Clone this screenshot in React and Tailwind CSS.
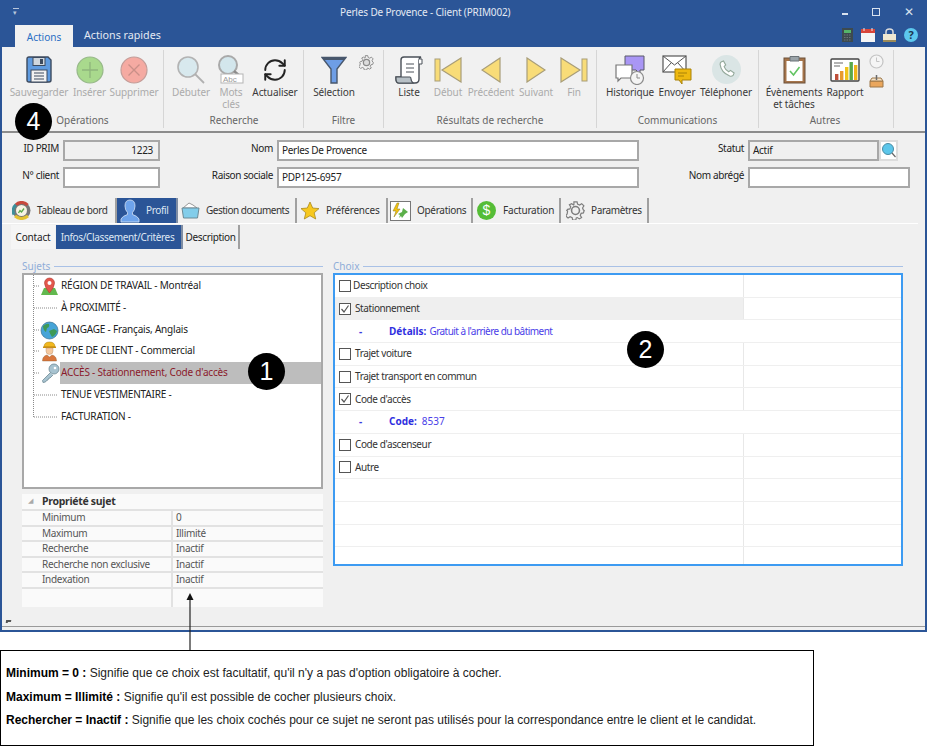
import { RefreshCw } from 'lucide-react';

// ---- ribbon icons ----
const Save = () => (
  <svg width="26" height="27" viewBox="0 0 26 27">
    <path d="M1 3q0-2 2-2h19l3 3v20q0 2-2 2H3q-2 0-2-2z" fill="#5f9be0" stroke="#3c4a5e" strokeWidth="1.4" />
    <rect x="7" y="1.5" width="12" height="8" fill="#cfd6dd" stroke="#3c4a5e" />
    <rect x="14" y="3" width="3" height="5" fill="#3c4a5e" />
    <rect x="5" y="14" width="16" height="12" fill="#f2f2f2" stroke="#3c4a5e" />
    <path d="M8 17h10M8 20h10M8 23h10" stroke="#3c4a5e" />
  </svg>
);
const PlusCircle = () => (
  <svg width="28" height="28" viewBox="0 0 28 28">
    <circle cx="14" cy="14" r="13" fill="#a9d98d" stroke="#98b98a" strokeWidth="1.2" />
    <path d="M14 6v16M6 14h16" stroke="#8fb57c" strokeWidth="1.3" />
  </svg>
);
const XCircle = () => (
  <svg width="28" height="28" viewBox="0 0 28 28">
    <circle cx="14" cy="14" r="13" fill="#f5aaa2" stroke="#c39d99" strokeWidth="1.2" />
    <path d="M8.5 8.5l11 11M19.5 8.5l-11 11" stroke="#c98f88" strokeWidth="1.3" />
  </svg>
);
const Lens = () => (
  <svg width="30" height="28" viewBox="0 0 30 28">
    <circle cx="12" cy="11" r="10" fill="#d8e9ee" stroke="#b3b3b3" strokeWidth="1.6" />
    <path d="M19 18l9 9" stroke="#b0b0b0" strokeWidth="1.8" />
  </svg>
);
const LensAbc = () => (
  <svg width="28" height="29" viewBox="0 0 28 29">
    <circle cx="11" cy="10" r="9" fill="#d3e6ec" stroke="#a9a9a9" strokeWidth="2" />
    <path d="M17 16l7 6" stroke="#8c8c8c" strokeWidth="2.4" />
    <rect x="4" y="19" width="22" height="9" fill="#fff" stroke="#b5b5b5" />
    <text x="6" y="27" fontSize="8" fill="#9a9a9a" fontFamily="Liberation Sans">Abc</text>
  </svg>
);
const Funnel = () => (
  <svg width="26" height="28" viewBox="0 0 26 28">
    <path d="M1 1.5h24L16 13v14h-6V13z" fill="#6e9ee6" stroke="#48576c" strokeWidth="1.4" />
    <path d="M1 1h24l-2 3H3z" fill="#48576c" />
  </svg>
);
const Gear = ({ size = 16, color = '#8a8a8a', hole = '#dcdcdc' }) => (
  <svg width={size} height={size} viewBox="0 0 24 24">
    <path d="M10 1h4l.6 3 2.6 1.1 2.6-1.7 2.8 2.8-1.7 2.6L22 11.4l1 .6v0l-1 3-2.9.6-1.1 2.6 1.7 2.6-2.8 1.8-2.6-1.7-1.3.5-.6 2.6h-4l-.6-3-2.6-1.1-2.6 1.7-2.8-2.8 1.7-2.6L2 12.6l-1-.6 1-1.4 2.9-.6L6 7.4 4.3 4.8l2.8-1.4 2.6 1.7L10 4.6z" fill="#f0f0f0" stroke={color} strokeWidth="1.5" />
    <circle cx="12" cy="12" r="5" fill={hole} stroke={color} strokeWidth="2" />
  </svg>
);
const Scroll = () => (
  <svg width="28" height="28" viewBox="0 0 28 28">
    <path d="M6 21V4q0-3 3-3h17q-2 1-2 3v19q0 4-4 4H4q-3 0-3-4v-2z" fill="#fff" stroke="#4a5058" strokeWidth="1.4" />
    <path d="M1 21h14q1 0 1 2t2 4H4q-3 0-3-4z" fill="#b7c0c6" stroke="#4a5058" strokeWidth="1.2" />
    <path d="M11 8h8M11 12h8M11 16h8" stroke="#4a5058" />
    <path d="M24 3h3v5h-3" fill="#fff" stroke="#4a5058" />
  </svg>
);
const navFill = '#f8dc78';
const navStroke = '#a89d78';
const First = () => (
  <svg width="28" height="26" viewBox="0 0 28 26">
    <rect x="1" y="2" width="5" height="22" fill={navFill} stroke={navStroke} />
    <path d="M27 1v24L8 13z" fill={navFill} stroke={navStroke} strokeWidth="1.2" />
  </svg>
);
const Prev = () => (
  <svg width="20" height="26" viewBox="0 0 20 26">
    <path d="M19 1v24L1 13z" fill={navFill} stroke={navStroke} strokeWidth="1.2" />
  </svg>
);
const Next = () => (
  <svg width="20" height="26" viewBox="0 0 20 26">
    <path d="M1 1v24l18-12z" fill={navFill} stroke={navStroke} strokeWidth="1.2" />
  </svg>
);
const Last = () => (
  <svg width="28" height="26" viewBox="0 0 28 26">
    <rect x="22" y="2" width="5" height="22" fill={navFill} stroke={navStroke} />
    <path d="M1 1v24l19-12z" fill={navFill} stroke={navStroke} strokeWidth="1.2" />
  </svg>
);
const History = () => (
  <svg width="30" height="30" viewBox="0 0 30 30">
    <path d="M10 1h19v14h-4v4l-4-4H10z" fill="#a996f5" stroke="#5a5a68" />
    <path d="M1 10h16v13H6l-3 3v-3H1z" fill="#fff" stroke="#777" strokeWidth="1.2" />
    <circle cx="22" cy="23" r="6.5" fill="#f4f4f4" stroke="#8a8a8a" strokeWidth="1.2" />
    <path d="M22 19v4h3" stroke="#8a8a8a" fill="none" />
  </svg>
);
const Send = () => (
  <svg width="30" height="30" viewBox="0 0 30 30">
    <rect x="1" y="1" width="23" height="16" fill="#fff" stroke="#555" strokeWidth="1.2" />
    <path d="M1 1l11.5 9L24 1M1 17l8-9M24 17l-8-9" stroke="#555" fill="none" />
    <path d="M13 14h16v11H20v4l-3-4h-4z" fill="#efb90f" stroke="#a98208" />
    <path d="M16 18h9M16 21h6" stroke="#a98208" />
  </svg>
);
const Phone = () => (
  <svg width="29" height="29" viewBox="0 0 29 29">
    <circle cx="14.5" cy="14.5" r="14.5" fill="#dae5e5" />
    <path d="M9 7l2.5-1 2.2 4-1.6 1.6q1 3 4.6 5.2l1.8-1.4 3.6 2.6-1 2.4q-1.4 1.2-3.4.6-8.6-3.4-9.6-11.6 0-1.8 1-2.4z" fill="#fff" stroke="#93a89a" strokeWidth="1.1" />
  </svg>
);
const Clipboard = () => (
  <svg width="23" height="29" viewBox="0 0 23 29">
    <rect x="1" y="3" width="21" height="25" fill="#a5744a" stroke="#6d5038" />
    <rect x="3.5" y="6" width="16" height="20" fill="#fff" />
    <path d="M7 1.5h9V6H7z" fill="#9aa3a8" stroke="#6b7378" />
    <path d="M7 16l3.5 4 6-8" stroke="#62c462" strokeWidth="1.6" fill="none" />
  </svg>
);
const Report = () => (
  <svg width="30" height="24" viewBox="0 0 30 24">
    <rect x="1" y="1" width="28" height="22" rx="1" fill="#fff" stroke="#444" strokeWidth="1.4" />
    <path d="M4 5h9M4 8h6" stroke="#9a9a9a" strokeWidth="1.4" />
    <rect x="5" y="16" width="3.4" height="6" fill="#c0503a" />
    <rect x="10" y="13" width="3.4" height="9" fill="#e89a2c" />
    <rect x="15" y="9" width="3.4" height="13" fill="#f0c419" />
    <rect x="19.5" y="4" width="3.4" height="18" fill="#5aa84a" />
    <rect x="24" y="7" width="3.4" height="15" fill="#f0b419" />
  </svg>
);
const SmallClock = () => (
  <svg width="15" height="15" viewBox="0 0 15 15">
    <circle cx="7.5" cy="7.5" r="6.5" fill="#f5f5f5" stroke="#c4c4c4" strokeWidth="1.2" />
    <path d="M7.5 3.5v4h3" stroke="#c4c4c4" fill="none" />
  </svg>
);
const Inbox = () => (
  <svg width="15" height="13" viewBox="0 0 15 13">
    <path d="M1 6h13v6H1z" fill="#eaa65c" stroke="#9c7748" />
    <path d="M3 3h9l2 3H1z" fill="#f5e2c6" stroke="#9c7748" />
    <path d="M7.5 0v5" stroke="#6b6b6b" strokeWidth="1.5" />
  </svg>
);

// ---- title bar icons ----
const Calc = () => (
  <svg width="11" height="14" viewBox="0 0 11 14">
    <rect width="11" height="14" fill="#3d4a4e" />
    <rect x="2" y="2" width="7" height="3" fill="#55b56a" />
    <path d="M2 7h7M2 9.5h7M2 12h7" stroke="#6a7478" strokeDasharray="1.5 1" />
  </svg>
);
const Calendar = () => (
  <svg width="14" height="14" viewBox="0 0 14 14">
    <rect y="1" width="14" height="13" fill="#f5f5f5" />
    <rect y="1" width="14" height="4" fill="#d9453a" />
    <path d="M3 0v3M11 0v3" stroke="#eee" />
  </svg>
);
const Lock = () => (
  <svg width="13" height="14" viewBox="0 0 13 14">
    <path d="M3 7V4q0-3 3.5-3T10 4v3" fill="none" stroke="#dcdcdc" strokeWidth="1.5" />
    <rect y="6" width="13" height="8" fill="#efe8d2" />
    <rect y="12" width="13" height="2" fill="#9c8a58" />
  </svg>
);
const Help = () => (
  <div className="w-[14px] h-[14px] rounded-full bg-[#5cc8ee] text-[#1d3550] text-[11px] font-bold leading-[14px] text-center">?</div>
);

// ---- tab icons ----
const Gauge = () => (
  <svg width="19" height="19" viewBox="0 0 19 19">
    <circle cx="9.5" cy="9.5" r="9" fill="#777" />
    <circle cx="9.5" cy="9.5" r="5.5" fill="#f6f3e4" />
    <path d="M2 13.5A8 8 0 0 1 4 3.700" fill="none" stroke="#3c8f9a" strokeWidth="3" />
    <path d="M4 3.700A8 8 0 0 1 15.500 4" fill="none" stroke="#c8493c" strokeWidth="3" />
    <path d="M3 15q6.500 5 13 0" fill="none" stroke="#e4c231" strokeWidth="3" />
    <path d="M6.500 12l1.500-2.500 1.500 1.500 2.500-3.500" stroke="#5aa84a" strokeWidth="1.300" fill="none" />
  </svg>
);
const Person = () => (
  <svg width="20" height="24" viewBox="0 0 20 24">
    <path d="M10 1q5 0 5 6 0 4-2.500 6.500v2q5 1.500 6.500 4.500v3H1v-3q1.500-3 6.500-4.500v-2Q5 11 5 7q0-6 5-6z" fill="#6ea4ec" stroke="#d5e3f6" strokeWidth=".8" />
  </svg>
);
const Folder = () => (
  <svg width="19" height="17" viewBox="0 0 19 17">
    <path d="M2 6l6-5 4 2 4 3z" fill="#fff" stroke="#808080" strokeWidth=".8" />
    <path d="M1 6h17l-1.500 10H2.500z" fill="#82cdea" stroke="#6b8a96" />
  </svg>
);
const Star = () => (
  <svg width="20" height="19" viewBox="0 0 20 19">
    <path d="M10 1l2.700 6 6.300.6-4.800 4.200 1.500 6.200L10 14.700 4.300 18l1.500-6.200L1 7.600 7.300 7z" fill="#f7c81e" stroke="#a98a20" strokeWidth=".8" />
  </svg>
);
const OpsIcon = () => (
  <svg width="21" height="20" viewBox="0 0 21 20">
    <rect x=".5" y=".5" width="20" height="19" fill="#fff" stroke="#777" />
    <path d="M7 2L3 10h3l-2 6 6-8H7l2-6z" fill="#f2c20f" stroke="#8a7a20" strokeWidth=".5" />
    <path d="M13 7l5 4-3 2-3 4-1-2-2 2 1-3-2-1 4-2z" fill="#5cb04a" />
  </svg>
);
const Dollar = () => (
  <div className="w-[19px] h-[19px] rounded-full bg-[#55bd36] text-white text-[14px] leading-[19px] text-center font-['Liberation_Sans',sans-serif]">$</div>
);
const SearchCyan = () => (
  <svg width="14" height="15" viewBox="0 0 14 15">
    <circle cx="6" cy="6" r="5.500" fill="#5cc6ea" stroke="#4a8ca4" />
    <path d="M10 10l3.500 4" stroke="#666" strokeWidth="1.200" />
  </svg>
);

// ---- tree icons (drawn in the 36x22 connector cell) ----
const Pin = () => (
  <g>
    <path d="M17 20l3-7h11l3 7z" fill="#62b84e" />
    <path d="M25.500 18q-5-6-5-10a5 5 0 0 1 10 0q0 4-5 10z" fill="#e2574c" stroke="#b03a30" strokeWidth=".6" />
    <circle cx="25.500" cy="8" r="2" fill="#fff" />
  </g>
);
const Globe = () => (
  <g>
    <circle cx="25.500" cy="11.500" r="8.500" fill="#46a4d8" stroke="#3a6e8e" strokeWidth=".7" />
    <path d="M19 7q4-3 6-2 1 3-2 4l-1 4q-3-2-3-6zM25 12l5-2 3 2q-1 4-5 6-2-3-3-6z" fill="#3f9a56" />
  </g>
);
const Worker = () => (
  <g>
    <path d="M20 7q0-5 5.500-5T31 7z" fill="#f2b81e" stroke="#a67c10" strokeWidth=".5" />
    <rect x="19" y="6.500" width="13" height="1.500" fill="#c98f10" />
    <path d="M22 8h7v3q0 3.500-3.500 3.500T22 11z" fill="#f5c9a0" stroke="#b08560" strokeWidth=".4" />
    <path d="M18.500 21q0-5 4.500-6l2.500 2 2.500-2q4.500 1 4.500 6z" fill="#d9763c" stroke="#8a5a30" strokeWidth=".4" />
  </g>
);
const Key = () => (
  <g>
    <circle cx="30" cy="7" r="5" fill="#a7c3d0" stroke="#6f8a96" strokeWidth=".8" />
    <path d="M26.500 10.500L18.500 18.500l.5 2 2.500-.5 1-1.500 1.500-.5.5-1.500 1.500-.5 3-3" fill="#a7c3d0" stroke="#6f8a96" strokeWidth=".8" />
    <circle cx="31" cy="6" r="1.300" fill="#fff" />
  </g>
);

const Btn = ({ w, icon, label, dim }) => (
  <div className={`flex flex-col items-center ${w}`}>
    <div className="flex items-center justify-center h-[33px]">{icon}</div>
    <div className={`text-[10px] leading-[12px] tracking-[-0.1px] text-center whitespace-pre-line ${dim ? 'text-[#ababab]' : 'text-[#3a3a3a]'}`}>{label}</div>
  </div>
);

const Group = ({ w, pl, title, children }) => (
  <div className={`flex flex-col h-[78px] mt-[3px] border-r border-[#d6d6d6] ${w} ${pl}`}>
    <div className="flex h-[63px] pt-[3px]">{children}</div>
    <div className="h-[14px] text-[10px] leading-[14px] text-center text-[#666] -ml-[6px]">{title}</div>
  </div>
);

const Field = ({ value, right, gray, cls }) => (
  <div className={`h-[21px] border-2 border-[#a8a8a8] text-[10px] tracking-[-0.3px] leading-[17px] text-[#222] ${gray ? 'bg-[#f0f0f0]' : 'bg-white'} ${right ? 'text-right pr-[5px]' : 'pl-[3px]'} ${cls || ''}`}>{value}</div>
);
const Label = ({ children }) => (
  <div className="h-[21px] text-right pr-[4px] text-[10px] tracking-[-0.35px] leading-[17px] text-[#222]">{children}</div>
);

const tabs = [
  { label: 'Tableau de bord', w: 'w-[107px]', icon: <Gauge />, iw: 'w-[26px] pl-[2px]', track: 'tracking-[-0.35px]' },
  { label: 'Profil', w: 'w-[61px]', icon: <Person />, active: true, iw: 'w-[28px] pl-[3px]', track: 'tracking-[-0.35px]' },
  { label: 'Gestion documents', w: 'w-[119px]', icon: <Folder />, iw: 'w-[27px] pl-[3px]', track: 'tracking-[-0.5px]' },
  { label: 'Préférences', w: 'w-[91px]', icon: <Star />, iw: 'w-[28px] pl-[3px]', track: 'tracking-[-0.2px]' },
  { label: 'Opérations', w: 'w-[85px]', icon: <OpsIcon />, iw: 'w-[28px] pl-[2px]', track: 'tracking-[-0.3px]' },
  { label: 'Facturation', w: 'w-[88px]', icon: <Dollar />, iw: 'w-[29px] pl-[4px]', track: 'tracking-[-0.2px]' },
  { label: 'Paramètres', w: 'w-[88px]', icon: <Gear size={19} color="#7d7d7d" hole="#f0f0f0" />, iw: 'w-[29px] pl-[5px]', track: 'tracking-[-0.35px]' },
];

const subjects = [
  { a: 'RÉGION DE TRAVAIL', b: ' - Montréal', icon: <Pin /> },
  { a: 'À PROXIMITÉ', b: ' -' },
  { a: 'LANGAGE', b: ' - Français, Anglais', icon: <Globe /> },
  { a: 'TYPE DE CLIENT', b: ' - Commercial', icon: <Worker /> },
  { a: 'ACCÈS', b: ' - Stationnement, Code d\'accès', icon: <Key />, selected: true },
  { a: 'TENUE VESTIMENTAIRE', b: ' -' },
  { a: 'FACTURATION', b: ' -', last: true },
];

const props = [
  ['Minimum', '0'],
  ['Maximum', 'Illimité'],
  ['Recherche', 'Inactif'],
  ['Recherche non exclusive', 'Inactif'],
  ['Indexation', 'Inactif'],
];

const choices = [
  { label: 'Description choix', first: true },
  { label: 'Stationnement', checked: true, shaded: true },
  { detail: 'Détails:', value: 'Gratuit à l\'arrière du bâtiment', vcls: 'pl-[3px] tracking-[-0.55px]' },
  { label: 'Trajet voiture' },
  { label: 'Trajet transport en commun' },
  { label: 'Code d\'accès', checked: true },
  { detail: 'Code:', value: '8537', vcls: 'pl-[5px]' },
  { label: 'Code d\'ascenseur' },
  { label: 'Autre' },
  {},
  {},
  {},
  {},
];

const Badge = ({ n, cls }) => (
  <div className={`absolute w-[37px] h-[37px] rounded-full bg-black text-white text-[25px] leading-[37px] text-center font-['Liberation_Sans',sans-serif] ${cls}`}>{n}</div>
);

const GroupTitle = ({ children }) => (
  <div className="flex items-center h-[14px] mb-0">
    <span className="text-[10px] text-[#8fadd8] leading-[14px] pr-[4px]">{children}</span>
    <div className="flex-1 h-[1px] bg-[#a9c1e6]" />
  </div>
);

export default function App() {
  return (
    <div className="relative w-[928px] h-[746px] bg-white overflow-hidden font-['Noto_Sans','Open_Sans',sans-serif]">
      {/* Window */}
      <div className="flex flex-col w-[927px] h-[632px] border-x-2 border-b-2 border-[#2b5597] bg-[#f0f0f0]">
        {/* Title bar */}
        <div className="h-[47px] bg-[#2b5597] flex flex-col -mx-[2px]">
          <div className="flex items-center h-[24px]">
            <div className="w-[340px] pl-[13px]">
              <div className="w-[6px] h-[1px] bg-[#b8c6dc] mb-[1px]" />
              <div className="text-[#b8c6dc] text-[7px] leading-[6px]">▾</div>
            </div>
            <div className="flex-1 text-[10px] tracking-[-0.15px] text-[#e3e9f3] leading-[24px]">Perles De Provence - Client (PRIM002)</div>
            <div className="flex items-center gap-[24px] pr-[13px] text-[#d9e2ef]">
              <div className="w-[6px] h-[2px] bg-[#d9e2ef] mt-[4px]" />
              <div className="w-[8px] h-[8px] border border-[#d9e2ef]" />
              <div className="text-[12px] leading-none">✕</div>
            </div>
          </div>
          <div className="flex items-end h-[23px] pl-[15px]">
            <div className="w-[58px] h-[22px] bg-[#f1f1f1] text-[#2b6fc4] text-[10px] leading-[24px] text-center">Actions</div>
            <div className="ml-[11px] h-[22px] text-[#e3e9f3] text-[10.700px] leading-[20px]">Actions rapides</div>
            <div className="flex-1" />
            <div className="flex items-center gap-[8px] pr-[9px] pb-[5px]">
              <Calc />
              <Calendar />
              <Lock />
              <Help />
            </div>
          </div>
        </div>

        {/* Ribbon */}
        <div className="flex h-[84px] bg-[#f1f1f1]">
          <Group w="w-[162px]" pl="pl-[6px]" title="Opérations">
            <Btn w="w-[62px]" dim icon={<Save />} label="Sauvegarder" />
            <Btn w="w-[39px]" dim icon={<PlusCircle />} label="Insérer" />
            <Btn w="w-[50px]" dim icon={<XCircle />} label="Supprimer" />
          </Group>
          <Group w="w-[140px]" pl="pl-[7px]" title="Recherche">
            <Btn w="w-[40px]" dim icon={<Lens />} label="Débuter" />
            <Btn w="w-[40px]" dim icon={<LensAbc />} label={'Mots\nclés'} />
            <Btn w="w-[48px]" icon={<RefreshCw size={26} strokeWidth={1.8} color="#222" />} label="Actualiser" />
          </Group>
          <Group w="w-[80px]" pl="pl-[6px]" title="Filtre">
            <Btn w="w-[48px]" icon={<Funnel />} label="Sélection" />
            <div className="pl-[1px] pt-[2px]"><Gear size={15} /></div>
          </Group>
          <Group w="w-[213px]" pl="pl-[6px]" title="Résultats de recherche">
            <Btn w="w-[38px]" icon={<Scroll />} label="Liste" />
            <Btn w="w-[40px]" dim icon={<First />} label="Début" />
            <Btn w="w-[46px]" dim icon={<Prev />} label="Précédent" />
            <Btn w="w-[44px]" dim icon={<Next />} label="Suivant" />
            <Btn w="w-[32px]" dim icon={<Last />} label="Fin" />
          </Group>
          <Group w="w-[162px]" pl="pl-[6px]" title="Communications">
            <Btn w="w-[54px]" icon={<History />} label="Historique" />
            <Btn w="w-[40px]" icon={<Send />} label="Envoyer" />
            <Btn w="w-[58px]" icon={<Phone />} label="Téléphoner" />
          </Group>
          <Group w="w-[135px]" pl="pl-[4px]" title="Autres">
            <Btn w="w-[62px]" icon={<Clipboard />} label={'Évènements\net tâches'} />
            <Btn w="w-[40px]" icon={<Report />} label="Rapport" />
            <div className="flex flex-col items-center w-[22px] gap-[6px] pt-[1px]">
              <SmallClock />
              <Inbox />
            </div>
          </Group>
        </div>
        <div className="h-[2px] bg-[#8c8c8c]" />

        {/* Form */}
        <div className="grid grid-cols-[61px_97px_117px_362px_109px_162px] gap-y-[6px] pt-[7px]">
          <Label>ID PRIM</Label>
          <Field value="1223" right gray />
          <Label>Nom</Label>
          <Field value="Perles De Provence" />
          <Label>Statut</Label>
          <div className="flex">
            <Field value="Actif" gray cls="w-[131px]" />
            <div className="w-[19px] h-[21px] border-2 border-[#dcdcdc] bg-white flex items-center justify-center"><SearchCyan /></div>
          </div>
          <Label>N° client</Label>
          <Field value="" />
          <Label>Raison sociale</Label>
          <Field value="PDP125-6957" />
          <Label>Nom abrégé</Label>
          <Field value="" />
        </div>

        {/* Main tabs */}
        <div className="mt-[10px] mr-[7px] flex h-[26px] pl-[8px] border-b border-white">
          {tabs.map((t) => (
            <div key={t.label} className={`flex items-center h-[25px] ${t.w} ${t.active ? 'bg-[#2b5597] text-[#dfe7f3] border-r-2 border-[#7f8da3]' : 'text-[#333] border-r-2 border-[#a0a0a0]'}`}>
              <div className={`flex justify-start shrink-0 ${t.iw}`}>{t.icon}</div>
              <span className={`text-[10px] pl-[1px] whitespace-nowrap ${t.track}`}>{t.label}</span>
            </div>
          ))}
        </div>

        {/* Sub tabs */}
        <div className="flex h-[24px] pl-[9px] mt-[1px]">
          <div className="w-[44px] text-[10px] tracking-[-0.2px] leading-[24px] text-center text-[#222] bg-[#f5f5f5]">Contact</div>
          <div className="w-[127px] ml-[1px] pr-[2px] text-[10px] tracking-[-0.35px] leading-[24px] text-center text-[#dfe7f3] bg-[#2b5597] border-r-2 border-[#7f8da3]">Infos/Classement/Critères</div>
          <div className="w-[57px] text-[10px] tracking-[-0.35px] leading-[24px] text-center text-[#222] border-r-2 border-[#a0a0a0]">Description</div>
        </div>

        {/* Panels */}
        <div className="flex gap-[10px] pl-[20px] pt-[10px] flex-1">
          <div className="w-[301px] flex flex-col">
            <GroupTitle>Sujets</GroupTitle>
            <div className="h-[216px] border-2 border-[#a8a8a8] bg-white">
              {subjects.map((s) => (
                <div key={s.a} className="flex h-[21.750px]">
                  <svg width="36" height="22" className="shrink-0">
                    <path d={s.last ? 'M9.500 0V11' : 'M9.500 0V22'} stroke="#8a8a8a" strokeDasharray="1 1" fill="none" />
                    <path d={s.icon ? 'M10 11H16' : 'M10 11H33'} stroke="#8a8a8a" strokeDasharray="1 1" fill="none" />
                    {s.icon}
                  </svg>
                  <div className={`flex-1 pl-[1px] text-[10px] tracking-[-0.2px] leading-[21px] whitespace-nowrap ${s.selected ? 'bg-[#bdbdbd] text-[#8b1a2b]' : 'text-[#222]'}`}>{s.a}{s.b}</div>
                </div>
              ))}
            </div>
            <div className="mt-[5px] h-[113px] bg-[#fafafa] flex flex-col">
              <div className="flex items-center h-[15px]">
                <span className="w-[20px] pl-[6px] text-[7px] text-[#aaa]">◢</span>
                <span className="text-[10.500px] tracking-[-0.3px] font-bold text-[#333] leading-[15px]">Propriété sujet</span>
              </div>
              {props.map(([k, v]) => (
                <div key={k} className="flex h-[15.500px] border-t-2 border-[#e2e2e2]">
                  <div className="w-[151px] pl-[20px] border-r-2 border-[#e2e2e2] text-[10px] tracking-[-0.3px] leading-[12px] text-[#555]">{k}</div>
                  <div className="pl-[3px] text-[10px] tracking-[-0.3px] leading-[12px] text-[#555]">{v}</div>
                </div>
              ))}
              <div className="flex flex-1 border-t-2 border-[#e2e2e2]">
                <div className="w-[151px] border-r-2 border-[#e2e2e2]" />
              </div>
            </div>
          </div>

          <div className="w-[570px] flex flex-col">
            <GroupTitle>Choix</GroupTitle>
            <div className="h-[293px] border-2 border-[#3d9bf2] bg-white overflow-hidden">
              {choices.map((c, i) => (
                <div key={i} className="flex h-[22.700px] border-b border-[#efefef]">
                  {c.detail ? (
                    <div className="flex items-center text-[10px] text-[#4a40e8]">
                      <span className="w-[26px] pl-[24px] font-bold text-[#3a3ae0]">-</span>
                      <span className="pl-[28px] font-bold text-[#2f2fe0]">{c.detail}</span>
                      <span className={c.vcls}>{c.value}</span>
                    </div>
                  ) : (
                    <div className={`flex items-center w-[409px] border-r border-[#e8e8e8] ${c.shaded ? 'bg-[#efefef]' : ''}`}>
                      {c.label && (
                        <>
                          <div className="ml-[4px] w-[12px] h-[12px] border border-[#555] bg-white flex items-center justify-center">
                            {c.checked && (
                              <svg width="10" height="10" viewBox="0 0 10 10"><path d="M1.500 5l2.500 3L8.500 1.500" stroke="#555" strokeWidth="1.200" fill="none" /></svg>
                            )}
                          </div>
                          <span className={`text-[10px] tracking-[-0.4px] text-[#333] ${c.first ? 'pl-[2px]' : 'pl-[4px]'}`}>{c.label}</span>
                        </>
                      )}
                    </div>
                  )}
                </div>
              ))}
            </div>
          </div>
        </div>

        {/* Bottom strip */}
        <div className="h-[4px] border-t border-[#9a9a9a] relative">
          <div className="absolute left-[4px] -top-[7px] w-[5px] h-[3px] border-l-2 border-t-2 border-[#555] -skew-x-12" />
        </div>
      </div>

      {/* Callouts */}
      <Badge n="4" cls="left-[15px] top-[103px]" />
      <Badge n="1" cls="left-[248px] top-[353px]" />
      <Badge n="2" cls="left-[627px] top-[331px]" />

      <svg width="12" height="60" className="absolute left-[184px] top-[591px]">
        <path d="M6 8V60" stroke="#222" strokeWidth="1.200" />
        <path d="M2.500 9L6 2l3.500 7z" fill="#111" />
      </svg>

      <div className="absolute left-0 top-[650px] w-[814px] h-[96px] border border-black bg-white px-[5px] pt-[14px] flex flex-col gap-[7px] font-['Liberation_Sans',sans-serif] text-[12px] leading-[16.500px] text-[#222]">
        <div><b className="text-black">Minimum = 0 :</b> Signifie que ce choix est facultatif, qu'il n'y a pas d'option obligatoire à cocher.</div>
        <div><b className="text-black">Maximum = Illimité :</b> Signifie qu'il est possible de cocher plusieurs choix.</div>
        <div><b className="text-black">Rechercher = Inactif :</b> Signifie que les choix cochés pour ce sujet ne seront pas utilisés pour la correspondance entre le client et le candidat.</div>
      </div>
    </div>
  );
}
